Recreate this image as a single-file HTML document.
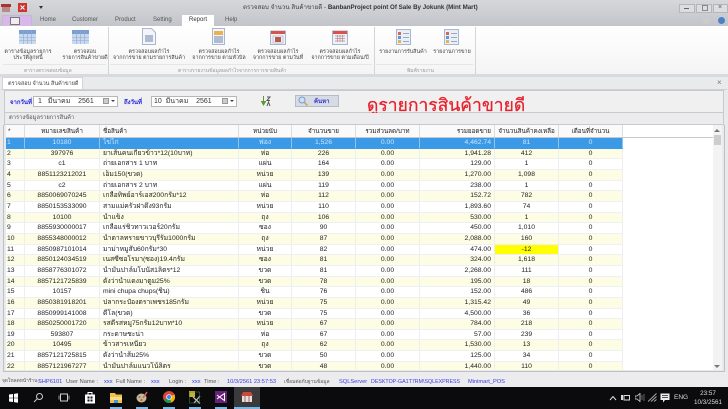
<!DOCTYPE html>
<html><head><meta charset="utf-8">
<style>
html,body{margin:0;padding:0;background:#d4d5d9}
#p{position:relative;width:728px;height:409px;overflow:hidden;font-family:"Liberation Sans","Noto Sans CJK SC",sans-serif;font-size:6.5px;color:#333;background:#e9eaec;filter:blur(.25px)}
.a{position:absolute;white-space:nowrap}
.c{transform:translateX(-50%);text-align:center;line-height:6.500px;color:#444;font-size:5.400px}
.gl{color:#999;font-size:5px;top:67px}
.tab{top:17px;color:#555;font-size:6px}
.v{position:absolute;top:27px;width:1px;height:47px;background:#d4d5d9}
.hl{position:absolute;top:64px;height:1px;background:#e6e6e8}
#g{position:absolute;left:6px;top:125px;width:716px;height:245px;background:#fff;overflow:hidden}
.r{display:flex;height:10.667px;line-height:10.667px;font-size:6.800px;color:#222;box-sizing:border-box}
.r span{display:block;flex:none;box-sizing:border-box;border-right:1px solid #eee;border-bottom:1px solid #f0f0f0;overflow:hidden;white-space:nowrap;text-align:center}
.r span:nth-child(1){width:19px;text-align:left;padding-left:1px}
.r span:nth-child(2){width:75px}
.r span:nth-child(3){width:139px;text-align:left;padding-left:3px}
.r span:nth-child(4){width:53px}
.r span:nth-child(5){width:64px}
.r span:nth-child(6){width:64px}
.r span:nth-child(7){width:75px;text-align:right;padding-right:3px}
.r span:nth-child(8){width:64px}
.r span:nth-child(9){width:64px}
.o span{background:#fdfde6}
.s span{background:#3a9ae8;color:#cfe6fa;border-right-color:#8cc4f2;border-bottom-color:#3a9ae8}
.h{height:13px;line-height:13px;font-size:6.300px;border-bottom:1px solid #c8c8c8}
.h span{background:#fafafa;border-right:1px solid #ddd;border-bottom:0}
.h span:nth-child(7){text-align:right}
.st{top:377px;line-height:10px;font-size:5.700px}
.b{color:#3a3ae0}
svg{position:absolute;display:block}
</style></head><body><div id="p">

<!-- title bar -->
<div class="a" style="left:0;top:0;width:728px;height:26px;background:linear-gradient(#d6d7db,#c3c4c9)"></div>
<svg style="left:1px;top:3px" width="10" height="10" viewBox="0 0 10 10"><rect x="1" y="3" width="8" height="6" fill="#b88"/><rect x="0" y="1" width="10" height="3" fill="#a33"/></svg>
<svg style="left:18px;top:3px" width="9" height="9" viewBox="0 0 9 9"><rect width="9" height="9" fill="#c33"/><path d="M2.500 2.500L6.500 6.500M6.500 2.500L2.500 6.500" stroke="#fff"/></svg>
<div class="a" style="left:39px;top:6px;width:0;height:0;border-left:2px solid transparent;border-right:2px solid transparent;border-top:3px solid #333"></div>
<div class="a" style="left:243px;top:3px;font-size:6.200px;line-height:9px;color:#444">ตรวจสอบ จำนวน สินค้าขายดี - <b style="color:#333">BanbanProject point Of Sale By Jokunk (Mint Mart)</b></div>
<div class="a" style="left:679px;top:4px;width:14px;height:7px;background:#dcdde0;border:1px solid #b5b6ba"></div>
<div class="a" style="left:696px;top:4px;width:14px;height:7px;background:#dcdde0;border:1px solid #b5b6ba"></div>
<div class="a" style="left:713px;top:4px;width:13px;height:7px;background:#dcdde0;border:1px solid #b5b6ba"></div>
<div class="a" style="left:684px;top:8px;width:5px;height:1px;background:#666"></div>
<div class="a" style="left:702px;top:5px;width:4px;height:4px;border:1px solid #888"></div>
<div class="a" style="left:718px;top:3px;font-size:7px;line-height:9px;color:#555">×</div>
<div class="a" style="left:703px;top:17px;width:7px;height:7px;border-radius:50%;background:#ccc"></div>
<div class="a" style="left:718px;top:17px;width:7px;height:7px;border-radius:50%;background:#4a82c8"></div>

<!-- tabs -->
<div class="a" style="left:2px;top:15px;width:28px;height:10px;background:#d8b8e8;border:1px solid #c9b5d8"></div>
<div class="a" style="left:10px;top:17px;width:8px;height:6px;background:#eee;border:1px solid #777"></div>
<div class="a" style="left:182px;top:15px;width:32px;height:12px;background:#fff"></div>
<div class="a tab" style="left:40px">Home</div>
<div class="a tab" style="left:72px">Customer</div>
<div class="a tab" style="left:115px">Product</div>
<div class="a tab" style="left:153px">Setting</div>
<div class="a tab" style="left:189px;color:#333">Report</div>
<div class="a tab" style="left:225px">Help</div>

<!-- ribbon -->
<div class="a" style="left:0;top:26px;width:728px;height:48px;background:linear-gradient(#fff,#f4f4f5)"></div>
<div class="v" style="left:108px"></div><div class="v" style="left:374px"></div><div class="v" style="left:475px"></div>
<div class="hl" style="left:3px;width:103px"></div><div class="hl" style="left:110px;width:262px"></div><div class="hl" style="left:376px;width:97px"></div>

<svg style="left:19px;top:30px" width="17" height="14" viewBox="0 0 17 14"><rect width="17" height="14" fill="#c9d9ee"/><rect width="17" height="4" fill="#7b9fd0"/><path d="M0 7.500H17M0 10.500H17M4.500 0V14M8.500 0V14M12.500 0V14" stroke="#8fa9cf" stroke-width=".6"/></svg>
<svg style="left:72px;top:30px" width="17" height="14" viewBox="0 0 17 14"><rect width="17" height="14" fill="#c9d9ee"/><rect width="17" height="4" fill="#7b9fd0"/><path d="M0 7.500H17M0 10.500H17M4.500 0V14M8.500 0V14M12.500 0V14" stroke="#8fa9cf" stroke-width=".6"/></svg>
<svg style="left:142px;top:28px" width="14" height="17" viewBox="0 0 14 17"><path d="M.5.500H9.500L13.500 4.500V16.500H.5Z" fill="#f3f5fa" stroke="#a9b6cf"/><rect x="3" y="7" width="8" height="7" fill="#aebbd4"/></svg>
<svg style="left:212px;top:28px" width="13" height="17" viewBox="0 0 13 17"><rect x=".5" y=".5" width="12" height="16" fill="#f3f5fa" stroke="#a9b6cf"/><rect x="2" y="3" width="9" height="4" fill="#eeb04a"/><rect x="2" y="8" width="9" height="7" fill="#aebbd4"/></svg>
<svg style="left:270px;top:29px" width="16" height="16" viewBox="0 0 16 16"><rect x=".5" y="2" width="15" height="13.500" fill="#eef1f7" stroke="#a9b6cf"/><rect x="1" y="2" width="14" height="3" fill="#d9534a"/><rect x="5" y="8" width="6" height="5" fill="#b9584f"/><rect x="3" y="7" width="10" height="7" fill="none" stroke="#aab" stroke-width=".6"/></svg>
<svg style="left:332px;top:29px" width="16" height="16" viewBox="0 0 16 16"><rect x=".5" y="2" width="15" height="13.500" fill="#eef1f7" stroke="#a9b6cf"/><rect x="1" y="2" width="14" height="3" fill="#d9534a"/><path d="M3 7H13M3 9.500H13M3 12H13M5.500 6V13M8 6V13M10.500 6V13" stroke="#c08a90" stroke-width=".7"/></svg>
<svg style="left:396px;top:29px" width="15" height="16" viewBox="0 0 15 16"><rect x=".5" y=".5" width="14" height="15" fill="#e9eef7" stroke="#a9b6cf"/><rect x="2" y="3" width="3" height="3" fill="#d9655a"/><rect x="2" y="7" width="3" height="3" fill="#5d9bd5"/><rect x="2" y="11" width="3" height="3" fill="#eeb04a"/><path d="M7 4.500H13M7 8.500H13M7 12.500H13" stroke="#9aa9c4"/></svg>
<svg style="left:444px;top:29px" width="15" height="16" viewBox="0 0 15 16"><rect x=".5" y=".5" width="14" height="15" fill="#e9eef7" stroke="#a9b6cf"/><rect x="2" y="3" width="3" height="3" fill="#d9655a"/><rect x="2" y="7" width="3" height="3" fill="#5d9bd5"/><rect x="2" y="11" width="3" height="3" fill="#eeb04a"/><path d="M7 4.500H13M7 8.500H13M7 12.500H13" stroke="#9aa9c4"/></svg>

<div class="a c" style="left:28px;top:48.500px">ตารางข้อมูลรายการ<br>ประวัติลูกหนี้</div>
<div class="a c" style="left:85px;top:48.500px">ตรวจสอบ<br>รายการสินค้าขายดี</div>
<div class="a c" style="left:149px;top:48.500px">ตรวจสอบผลกำไร<br>จากการขาย ตามรายการสินค้า</div>
<div class="a c" style="left:219px;top:48.500px">ตรวจสอบผลกำไร<br>จากการขาย ตามหัวบิล</div>
<div class="a c" style="left:278px;top:48.500px">ตรวจสอบผลกำไร<br>จากการขาย ตามวันที่</div>
<div class="a c" style="left:340px;top:48.500px">ตรวจสอบผลกำไร<br>จากการขาย ตามเดือน/ปี</div>
<div class="a c" style="left:403px;top:48px;line-height:8px">รายงานการรับสินค้า</div>
<div class="a c" style="left:452px;top:48px;line-height:8px">รายงานการขาย</div>
<div class="a gl" style="left:24px">ตารางตรวจสอบข้อมูล</div>
<div class="a gl" style="left:178px">ตารางรายงานข้อมูลผลกำไรจากการการขายสินค้า</div>
<div class="a gl" style="left:407px">พิมพ์รายงาน</div>

<!-- mdi -->
<div class="a" style="left:0;top:74px;width:728px;height:3px;background:#d9dadd"></div>
<div class="a" style="left:2px;top:77px;width:81px;height:13px;background:#fff;border:1px solid #d4d5d8;border-bottom:0;box-sizing:border-box;line-height:12px;font-size:5.500px;padding-left:5px;color:#444">ตรวจสอบ จำนวน สินค้าขายดี</div>
<div class="a" style="left:717px;top:78px;font-size:8px;line-height:10px;color:#777">×</div>
<div class="a" style="left:1px;top:89px;width:726px;height:1px;background:#cfd0d3"></div>

<!-- filter -->
<div class="a" style="left:4px;top:90px;width:720px;height:23px;background:#f0f0f1;border:1px solid #c8c9cc;box-sizing:border-box"></div>
<div class="a" style="left:10px;top:97px;color:#2a2ae0;font-size:6px;font-weight:bold">จากวันที่</div>
<div class="a" style="left:33px;top:96px;width:85px;height:11px;background:#fff;border:1px solid #b8b8b8;box-sizing:border-box;line-height:10px;font-size:7px;padding-left:4px">1&nbsp;&nbsp;&nbsp;มีนาคม&nbsp;&nbsp;&nbsp;&nbsp;2561</div>
<div class="a" style="left:103px;top:98px;width:6px;height:6px;background:#ccc;border:1px solid #999;box-sizing:border-box"></div>
<div class="a" style="left:111px;top:100px;width:0;height:0;border-left:2px solid transparent;border-right:2px solid transparent;border-top:2px solid #444"></div>
<div class="a" style="left:124px;top:97px;color:#2a2ae0;font-size:6px;font-weight:bold">ถึงวันที่</div>
<div class="a" style="left:151px;top:96px;width:86px;height:11px;background:#fff;border:1px solid #b8b8b8;box-sizing:border-box;line-height:10px;font-size:7px;padding-left:2px">10&nbsp;&nbsp;มีนาคม&nbsp;&nbsp;&nbsp;&nbsp;2561</div>
<div class="a" style="left:222px;top:98px;width:6px;height:6px;background:#ccc;border:1px solid #999;box-sizing:border-box"></div>
<div class="a" style="left:230px;top:100px;width:0;height:0;border-left:2px solid transparent;border-right:2px solid transparent;border-top:2px solid #444"></div>
<svg style="left:261px;top:96px" width="10" height="11" viewBox="0 0 10 11"><path d="M2.500 0V7M.5 5.500L2.500 9L4.500 5.500Z" fill="#5a9a35" stroke="#5a9a35"/><path d="M6 1H9L6 4.500H9M6 10L7.500 6L9 10" fill="none" stroke="#555"/></svg>
<div class="a" style="left:295px;top:95px;width:44px;height:12px;background:#d6dbe4;border:1px solid #b5bcc8;box-sizing:border-box;line-height:13px;font-size:6px;font-weight:bold;padding-left:18px;color:#3a3ad0">ค้นหา</div>
<svg style="left:298px;top:96px" width="10" height="10" viewBox="0 0 10 10"><circle cx="4" cy="4" r="3" fill="#cfe0f5" stroke="#7a9cc6"/><path d="M6.500 6.500L9.500 9.500" stroke="#c9a050" stroke-width="1.500"/></svg>
<div class="a" style="left:367px;top:94px;font-size:17.500px;line-height:22px;color:#e8202c;font-weight:normal;-webkit-text-stroke:.25px #e8202c">ดูรายการสินค้าขายดี</div>

<div class="a" style="left:4px;top:113px;width:720px;height:12px;background:#ececee;border:1px solid #c8c9cc;border-top:0;box-sizing:border-box;line-height:11px;font-size:5.800px;padding-left:4px;color:#555">ตารางข้อมูลรายการสินค้า</div>

<!-- grid frame -->
<div class="a" style="left:3px;top:125px;width:722px;height:247px;border:1px solid #bfc0c3;border-top:0;box-sizing:border-box"></div>
<div id="g">
<div class="r h"><span style="padding-left:2px">*</span><span>หมายเลขสินค้า</span><span>ชื่อสินค้า</span><span>หน่วยนับ</span><span>จำนวนขาย</span><span>รวมส่วนลด/บาท</span><span>รวมยอดขาย</span><span>จำนวนสินค้าคงเหลือ</span><span>เดือนที่จำนวน</span></div>
<div class="r s"><span>1</span><span>10180</span><span>ไข่ไก่</span><span>ฟอง</span><span>1,526</span><span>0.00</span><span>4,462.74</span><span>81</span><span>0</span></div>
<div class="r o"><span>2</span><span>397976</span><span>ยาเส้นคนเกี่ยวข้าว*12(10บาท)</span><span>ห่อ</span><span>226</span><span>0.00</span><span>1,941.28</span><span>412</span><span>0</span></div>
<div class="r"><span>3</span><span>c1</span><span>ถ่ายเอกสาร 1 บาท</span><span>แผ่น</span><span>164</span><span>0.00</span><span>129.00</span><span>1</span><span>0</span></div>
<div class="r o"><span>4</span><span>8851123212021</span><span>เอ็ม150(ขวด)</span><span>หน่วย</span><span>139</span><span>0.00</span><span>1,270.00</span><span>1,098</span><span>0</span></div>
<div class="r"><span>5</span><span>c2</span><span>ถ่ายเอกสาร 2 บาท</span><span>แผ่น</span><span>119</span><span>0.00</span><span>238.00</span><span>1</span><span>0</span></div>
<div class="r o"><span>6</span><span>8850069070245</span><span>เกลือทิพย์อาร์เอส200กรัม*12</span><span>ห่อ</span><span>112</span><span>0.00</span><span>152.72</span><span>782</span><span>0</span></div>
<div class="r"><span>7</span><span>8850153533090</span><span>สามแม่ครัวฝาดึง93กรัม</span><span>หน่วย</span><span>110</span><span>0.00</span><span>1,893.60</span><span>74</span><span>0</span></div>
<div class="r o"><span>8</span><span>10100</span><span>น้ำแข็ง</span><span>ถุง</span><span>106</span><span>0.00</span><span>530.00</span><span>1</span><span>0</span></div>
<div class="r"><span>9</span><span>8855930000017</span><span>เกลือแร่ชิวทาวเวอร์20กรัม</span><span>ซอง</span><span>90</span><span>0.00</span><span>450.00</span><span>1,010</span><span>0</span></div>
<div class="r o"><span>10</span><span>8855348000012</span><span>น้ำตาลทรายขาวบุรีรัม1000กรัม</span><span>ถุง</span><span>87</span><span>0.00</span><span>2,088.00</span><span>160</span><span>0</span></div>
<div class="r"><span>11</span><span>8850987101014</span><span>มาม่าหมูสับ60กรัม*30</span><span>หน่วย</span><span>82</span><span>0.00</span><span>474.00</span><span style="background:#ffff00">-12</span><span>0</span></div>
<div class="r o"><span>12</span><span>8850124034519</span><span>เนสซี่ซอโรมา(ซอง)19.4กรัม</span><span>ซอง</span><span>81</span><span>0.00</span><span>324.00</span><span>1,618</span><span>0</span></div>
<div class="r"><span>13</span><span>8858776301072</span><span>น้ำมันปาล์มโบนัส1ลิตร*12</span><span>ขวด</span><span>81</span><span>0.00</span><span>2,268.00</span><span>111</span><span>0</span></div>
<div class="r o"><span>14</span><span>8857121725839</span><span>ดังว่าน้ำแดงมาตูม25%</span><span>ขวด</span><span>78</span><span>0.00</span><span>195.00</span><span>18</span><span>0</span></div>
<div class="r"><span>15</span><span>10157</span><span>mini chupa chups(ชิ้น)</span><span>ชิ้น</span><span>76</span><span>0.00</span><span>152.00</span><span>486</span><span>0</span></div>
<div class="r o"><span>16</span><span>8850381918201</span><span>ปลากระป๋องตราเพชร185กรัม</span><span>หน่วย</span><span>75</span><span>0.00</span><span>1,315.42</span><span>49</span><span>0</span></div>
<div class="r"><span>17</span><span>8850999141008</span><span>ดีโล(ขวด)</span><span>ขวด</span><span>75</span><span>0.00</span><span>4,500.00</span><span>36</span><span>0</span></div>
<div class="r o"><span>18</span><span>8850250001720</span><span>รสดีรสหมู75กรัม12บาท*10</span><span>หน่วย</span><span>67</span><span>0.00</span><span>784.00</span><span>218</span><span>0</span></div>
<div class="r"><span>19</span><span>593807</span><span>กระดาษชะน่า</span><span>ห่อ</span><span>67</span><span>0.00</span><span>57.00</span><span>239</span><span>0</span></div>
<div class="r o"><span>20</span><span>10495</span><span>ข้าวสารเหนียว</span><span>ถุง</span><span>62</span><span>0.00</span><span>1,530.00</span><span>13</span><span>0</span></div>
<div class="r"><span>21</span><span>8857121725815</span><span>ดังว่าน้ำส้ม25%</span><span>ขวด</span><span>50</span><span>0.00</span><span>125.00</span><span>34</span><span>0</span></div>
<div class="r o"><span>22</span><span>8857121967277</span><span>น้ำมันปาล์มแนวโน้ลิตร</span><span>ขวด</span><span>48</span><span>0.00</span><span>1,440.00</span><span>110</span><span>0</span></div>
</div>
<!-- scrollbar -->
<div class="a" style="left:713px;top:125px;width:9px;height:245px;background:#f3f3f3"></div>
<div class="a" style="left:714px;top:135px;width:7px;height:10px;background:#cdcdcd"></div>
<div class="a" style="left:714px;top:129px;width:0;height:0;border-left:3.500px solid transparent;border-right:3.500px solid transparent;border-bottom:3px solid #777"></div>
<div class="a" style="left:714px;top:365px;width:0;height:0;border-left:3.500px solid transparent;border-right:3.500px solid transparent;border-top:3px solid #777"></div>

<!-- status -->
<div class="a" style="left:0;top:372px;width:728px;height:15px;background:#ececef"></div>
<div class="a st" style="left:2px;color:#555;font-size:4.800px">จุดโหลดหน้าร้าน :</div>
<div class="a st b" style="left:38px">SHP6101</div>
<div class="a st" style="left:66px;color:#555">User Name :</div>
<div class="a st b" style="left:104px">xxx</div>
<div class="a st" style="left:116px;color:#555">Full Name :</div>
<div class="a st b" style="left:151px">xxx</div>
<div class="a st" style="left:169px;color:#555">Login :</div>
<div class="a st b" style="left:192px">xxx</div>
<div class="a st" style="left:204px;color:#555">Time :</div>
<div class="a st b" style="left:227px">10/3/2561 23:57:53</div>
<div class="a st" style="left:284px;color:#555;font-size:5px">เชื่อมต่อกับฐานข้อมูล</div>
<div class="a st b" style="left:339px">SQLServer</div>
<div class="a st b" style="left:371px;font-size:5.300px">DESKTOP-GA1T7RM\SQLEXPRESS</div>
<div class="a st b" style="left:468px">Minimart_POS</div>

<!-- taskbar -->
<div class="a" style="left:0;top:387px;width:728px;height:22px;background:#0b0b0d"></div>
<div class="a" style="left:234px;top:387px;width:26px;height:22px;background:#3a3a3c"></div>
<svg style="left:8px;top:393px" width="11" height="10" viewBox="0 0 11 10"><path d="M1 1.500L5 1V4.700H1ZM6 .9L10 .3V4.700H6ZM1 5.300H5V9L1 8.500ZM6 5.300H10V9.700L6 9.100Z" fill="#fff"/></svg>
<svg style="left:33px;top:392px" width="11" height="11" viewBox="0 0 11 11"><circle cx="6.500" cy="4.500" r="3" fill="none" stroke="#ccc"/><path d="M4.300 6.700L1 10" stroke="#ccc"/></svg>
<svg style="left:58px;top:393px" width="12" height="9" viewBox="0 0 12 9"><rect x="2.500" y="1" width="7" height="7" fill="none" stroke="#ccc"/><path d="M1 2.500V6.500M11 2.500V6.500" stroke="#999"/></svg>
<svg style="left:84px;top:391px" width="12" height="13" viewBox="0 0 12 13"><path d="M1 3.500H11V12.500H1Z" fill="#fff"/><path d="M4 3.500V1.500H8V3.500" fill="none" stroke="#fff"/><path d="M3.500 5.500H5.500V7.500H3.500ZM6.500 5.500H8.500V7.500H6.500ZM3.500 8.500H5.500V10.500H3.500ZM6.500 8.500H8.500V10.500H6.500Z" fill="#111"/></svg>
<svg style="left:110px;top:392px" width="12" height="11" viewBox="0 0 12 11"><path d="M0 1H5L6 2.500H12V11H0Z" fill="#eec04c"/><rect y="5" width="12" height="3" fill="#f8dc8a"/><rect x="4" y="8" width="4" height="3" fill="#3a9ad9"/></svg>
<svg style="left:136px;top:391px" width="12" height="12" viewBox="0 0 12 12"><ellipse cx="5.500" cy="7" rx="5" ry="4.500" fill="#c9b68e"/><circle cx="3.500" cy="6" r="1" fill="#3a8ad0"/><circle cx="5.500" cy="9" r="1" fill="#d04a3a"/><path d="M7 7L11 1" stroke="#c66" stroke-width="1.500"/></svg>
<svg style="left:163px;top:391px" width="12" height="12" viewBox="0 0 12 12"><circle cx="6" cy="6" r="6" fill="#db4437"/><path d="M6 6L1 9A6 6 0 0 0 8.500 11.500Z" fill="#0f9d58"/><path d="M6 6L11.500 3.500A6 6 0 0 1 8.500 11.500Z" fill="#f4b400"/><circle cx="6" cy="6" r="2.800" fill="#fff"/><circle cx="6" cy="6" r="2.100" fill="#4285f4"/></svg>
<svg style="left:189px;top:391px" width="12" height="13" viewBox="0 0 12 13"><rect x="0" y="0" width="6" height="6" fill="#c8b030"/><path d="M4 6L11 12.500M11 5L5 12" stroke="#bbb" stroke-width="1.200"/><rect x=".5" y="1" width="10" height="11" fill="none" stroke="#3a8a3a" stroke-width=".5"/></svg>
<svg style="left:215px;top:391px" width="12" height="12" viewBox="0 0 12 12"><rect width="12" height="12" fill="#68217a"/><path d="M2 4L4.500 6L2 8M9.500 2.500L4.500 6L9.500 9.500Z" fill="none" stroke="#fff"/></svg>
<svg style="left:241px;top:391px" width="12" height="12" viewBox="0 0 12 12"><rect x="1" y="5" width="10" height="6" fill="#e8e0d8"/><path d="M0 5L2 1H10L12 5Z" fill="#c84a3a"/><path d="M4 5V11M8 5V11" stroke="#a66"/></svg>
<div class="a" style="left:110px;top:407px;width:12px;height:2px;background:#78b8e8"></div>
<div class="a" style="left:136px;top:407px;width:12px;height:2px;background:#78b8e8"></div>
<div class="a" style="left:163px;top:407px;width:12px;height:2px;background:#78b8e8"></div>
<div class="a" style="left:189px;top:407px;width:12px;height:2px;background:#78b8e8"></div>
<div class="a" style="left:215px;top:407px;width:12px;height:2px;background:#78b8e8"></div>
<div class="a" style="left:234px;top:407px;width:26px;height:2px;background:#78b8e8"></div>

<svg style="left:609px;top:395px" width="8" height="6" viewBox="0 0 8 6"><path d="M1 5L4 1.500L7 5" fill="none" stroke="#ddd"/></svg>
<svg style="left:621px;top:394px" width="9" height="7" viewBox="0 0 9 7"><rect x="3" y="1.500" width="5.500" height="4.500" fill="none" stroke="#ddd"/><rect x="0" y="1" width="2" height="5" fill="#ddd"/></svg>
<svg style="left:635px;top:393px" width="10" height="9" viewBox="0 0 10 9"><path d="M0 3H2L5 .5V8.500L2 6H0Z" fill="none" stroke="#ddd" stroke-width=".8"/><path d="M7 2V7M9 1V8" stroke="#888" stroke-width=".7"/></svg>
<svg style="left:648px;top:393px" width="10" height="9" viewBox="0 0 10 9"><path d="M0 8.500L8.500 .5M3 8.500L8.500 3.500M6 8.500L8.500 6.500" stroke="#aaa"/></svg>
<svg style="left:660px;top:393px" width="10" height="10" viewBox="0 0 10 10"><path d="M.5.500H9.500V7H5L3 9.500V7H.5Z" fill="#eee"/><path d="M2 2.500H8M2 4.500H8" stroke="#222" stroke-width=".7"/></svg>
<div class="a" style="left:674px;top:393px;color:#ddd;font-size:6.500px;line-height:9px">ENG</div>
<div class="a" style="left:694px;top:389px;width:28px;text-align:center;color:#ddd;font-size:6.300px;line-height:9px">23:57<br>10/3/2561</div>
</div></body></html>
